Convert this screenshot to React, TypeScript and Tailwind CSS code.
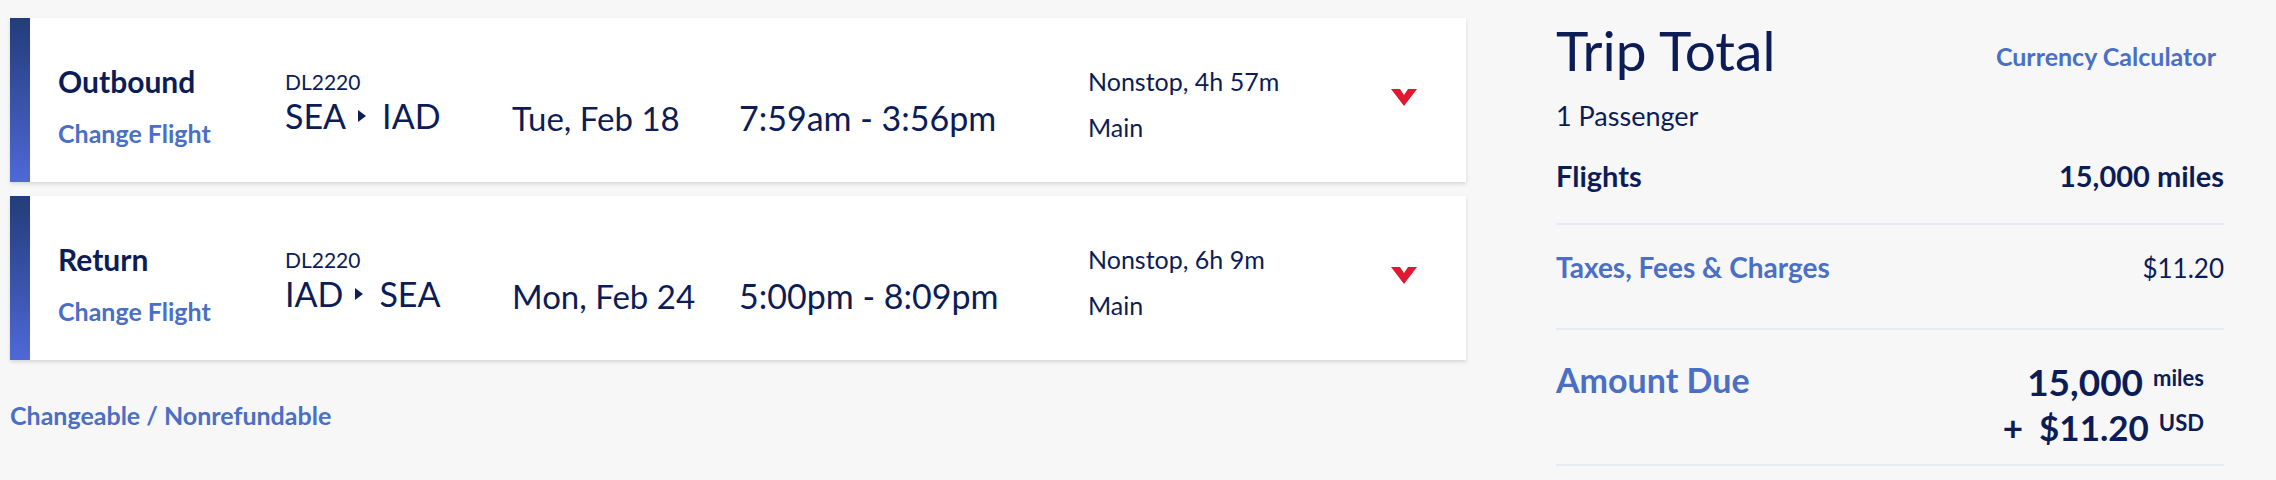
import React from "react";

interface Flight {
  label: string;
  number: string;
  from: string;
  to: string;
  date: string;
  time: string;
  duration: string;
  cabin: string;
}

const flights: Flight[] = [
  {
    label: "Outbound",
    number: "DL2220",
    from: "SEA",
    to: "IAD",
    date: "Tue, Feb 18",
    time: "7:59am - 3:56pm",
    duration: "Nonstop, 4h 57m",
    cabin: "Main",
  },
  {
    label: "Return",
    number: "DL2220",
    from: "IAD",
    to: "SEA",
    date: "Mon, Feb 24",
    time: "5:00pm - 8:09pm",
    duration: "Nonstop, 6h 9m",
    cabin: "Main",
  },
];

function Chevron() {
  return (
    <svg width="26" height="17" viewBox="0 0 26 17">
      <polygon points="0,0 9,0 13,6 17,0 26,0 13,17" fill="#e01933" />
    </svg>
  );
}

function RouteArrow() {
  return (
    <svg width="8" height="12" viewBox="0 0 8 12" className="ml-[12px] mr-[16px]">
      <polygon points="0,0 8,6 0,12" fill="#0e1e5b" />
    </svg>
  );
}

function FlightCard({ flight }: { flight: Flight }) {
  return (
    <div className="flex h-[164px] bg-white shadow-[0_2px_4px_rgba(0,0,0,0.13)]">
      <div className="w-[20px] bg-linear-to-b from-[#213d79] to-[#5068d8]" />
      {/* label + change link */}
      <div className="w-[255px] pl-[28px] pt-[48px]">
        <div className="text-[30px] leading-none font-bold">{flight.label}</div>
        <div className="mt-[25px] text-[25px] leading-none font-bold text-[#4a6fc5]">
          Change Flight
        </div>
      </div>
      <div className="w-[227px] pt-[53px]">
        <div className="text-[21px] leading-none">{flight.number}</div>
        <div className="mt-[7px] flex items-center text-[34px] leading-none">
          <span>{flight.from}</span>
          <RouteArrow />
          <span>{flight.to}</span>
        </div>
      </div>
      <div className="w-[227px] pt-[84px] text-[33px] leading-none">{flight.date}</div>
      <div className="w-[349px] pt-[83px] text-[34px] leading-none">{flight.time}</div>
      <div className="w-[303px] pt-[51px] text-[25px] leading-none">
        <div>{flight.duration}</div>
        <div className="mt-[21px]">{flight.cabin}</div>
      </div>
      <div className="pt-[71px]">
        <Chevron />
      </div>
    </div>
  );
}

export default function App() {
  return (
    <div className="min-h-screen w-full bg-[#f7f7f7] font-['Lato','Noto_Sans',sans-serif] text-[#0c1c57]">
      <div className="flex pl-[10px]">
        {/* flights */}
        <div className="w-[1456px] pt-[18px]">
          <div className="flex flex-col gap-[14px]">
            {flights.map((f) => (
              <FlightCard key={f.label} flight={f} />
            ))}
          </div>
          <div className="mt-[43px] text-[25px] leading-none font-bold text-[#4a6fc5]">
            Changeable / Nonrefundable
          </div>
        </div>

        {/* trip total */}
        <div className="ml-[90px] w-[668px]">
          <div className="flex justify-between">
            <div className="pt-[23px] text-[55px] leading-none">Trip Total</div>
            <div className="mr-[8px] pt-[44px] text-[25px] leading-none font-bold text-[#4a6fc5]">
              Currency Calculator
            </div>
          </div>
          <div className="mt-[24px] text-[27px] leading-none">1 Passenger</div>
          <div className="mt-[32px] flex justify-between text-[29px] leading-none font-bold">
            <span>Flights</span>
            <span>15,000 miles</span>
          </div>
          <div className="mt-[33px] h-[2px] bg-[#e6ebf4]" />
          <div className="mt-[28px] flex items-baseline justify-between leading-none">
            <span className="text-[28px] font-bold text-[#4a6fc5]">Taxes, Fees &amp; Charges</span>
            <span className="text-[26px]">$11.20</span>
          </div>
          <div className="mt-[47px] h-[2px] bg-[#e6ebf4]" />
          <div className="mt-[33px] flex justify-between">
            <div className="text-[34px] leading-none font-bold text-[#4a6fc5]">Amount Due</div>
            <div className="mr-[20px] flex flex-col items-end font-bold">
              <div className="text-[37px] leading-none">
                15,000
                <sup className="ml-[10px] text-[22px] -top-[10px]">miles</sup>
              </div>
              <div className="mt-[10px] text-[35px] leading-none">
                <span className="mr-[16px]">+</span>
                $11.20
                <sup className="ml-[10px] text-[22px] -top-[10px]">USD</sup>
              </div>
            </div>
          </div>
          <div className="mt-[19px] h-[2px] bg-[#e6ebf4]" />
        </div>
      </div>
    </div>
  );
}
